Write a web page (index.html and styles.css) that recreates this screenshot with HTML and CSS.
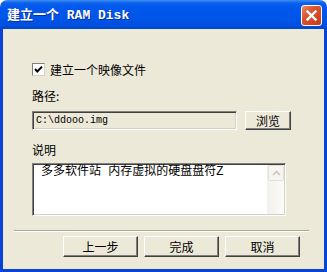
FILE: index.html
```html
<!DOCTYPE html>
<html lang="zh-CN">
<head>
    <meta charset="UTF-8">
    <meta name="viewport" content="width=device-width, initial-scale=1.0">
    <title>建立一个 RAM Disk</title>
    <link rel="stylesheet" href="styles.css">
</head>
<body>

<div class="window">
    <div class="titlebar">
        <span class="title">建立一个 RAM Disk</span>
        <button class="close-btn" aria-label="关闭">
            <svg width="11" height="11" viewBox="0 0 11 11">
                <path d="M1.5 1.5 L9.5 9.5 M9.5 1.5 L1.5 9.5" stroke="#fff" stroke-width="2.4" stroke-linecap="square"/>
            </svg>
        </button>
    </div>

    <div class="frame">
        <div class="client">
            <div class="form">
                <label class="check-row">
                    <span class="checkbox">
                        <svg width="11" height="11" viewBox="0 0 11 11">
                            <path d="M2 5 L4.3 7.5 L9 2.6" fill="none" stroke="#000" stroke-width="2"/>
                        </svg>
                    </span>
                    建立一个映像文件
                </label>

                <div class="label path-label">路径:</div>
                <div class="path-row">
                    <div class="path-box">C:\ddooo.img</div>
                    <button class="btn browse-btn">浏览</button>
                </div>

                <div class="label desc-label">说明</div>
                <div class="memo">
                    <div class="memo-text">多多软件站 内存虚拟的硬盘盘符Z</div>
                    <div class="scrollbar">
                        <div class="scroll-up">
                            <svg width="9" height="6" viewBox="0 0 9 6">
                                <path d="M1 5 L4.5 1.5 L8 5" fill="none" stroke="#c9c7ba" stroke-width="1.6"/>
                            </svg>
                        </div>
                    </div>
                </div>
            </div>

            <div class="separator"></div>

            <div class="button-row">
                <button class="btn wide-btn">上一步</button>
                <button class="btn wide-btn">完成</button>
                <button class="btn wide-btn">取消</button>
            </div>
        </div>
    </div>
</div>

</body>
</html>
```

FILE: styles.css
```css
body {
    margin: 0;
    padding: 0;
    background: #fff;
    font-family: "Noto Sans CJK SC", sans-serif;
    font-size: 12px;
    color: #000;
}

.window {
    width: 327px;
    height: 272px;
    display: flex;
    flex-direction: column;
    border-radius: 7px 7px 0 0;
    overflow: hidden;
}

.titlebar {
    height: 29px;
    box-sizing: border-box;
    padding: 2px 5px 0 7px;
    display: flex;
    align-items: center;
    justify-content: space-between;
    background: linear-gradient(#3d8ef5 0, #0c61ea 3px, #0158ee 7px, #0055e8 18px, #0050e0 25px, #0046cc 29px);
}

.title {
    color: #fff;
    font-family: "Liberation Mono", "Noto Sans CJK SC", monospace;
    font-size: 13px;
    font-weight: bold;
    line-height: 15px;
    text-shadow: 1px 1px 0 #0a2e9c;
}

.close-btn {
    width: 21px;
    height: 21px;
    padding: 0;
    border: 1px solid #fff;
    border-radius: 3px;
    background: linear-gradient(135deg, #e98a6c 0, #dd5531 35%, #c9391a 100%);
    display: flex;
    align-items: center;
    justify-content: center;
}

.frame {
    flex: 1;
    display: flex;
    padding: 0 3px 3px 3px;
    background: #0842d6;
}

.client {
    flex: 1;
    background: #ece9d8;
}

.form {
    padding: 34px 0 0 29px;
}

.check-row {
    display: flex;
    align-items: center;
    gap: 5px;
    height: 13px;
    line-height: 13px;
}

.checkbox {
    width: 13px;
    height: 13px;
    box-sizing: border-box;
    border: 1px solid #808080;
    border-right-color: #d4d0c8;
    border-bottom-color: #d4d0c8;
    background: #fff;
    display: flex;
    align-items: center;
    justify-content: center;
}

.label {
    line-height: 14px;
    height: 14px;
}

.path-label {
    margin-top: 13px;
}

.path-row {
    margin-top: 8px;
    display: flex;
    gap: 8px;
}

.path-box {
    width: 205px;
    height: 19px;
    box-sizing: border-box;
    padding-left: 1px;
    border: 1px solid #808080;
    border-right-color: #fff;
    border-bottom-color: #fff;
    box-shadow: inset 1px 1px 0 #404040, inset -1px -1px 0 #d4d0c8;
    padding: 0 3px;
    font-family: "Liberation Mono", monospace;
    font-size: 10px;
    line-height: 17px;
}

.btn {
    height: 19px;
    padding: 0;
    box-sizing: border-box;
    background: #ece9d8;
    border: 1px solid;
    border-color: #fff #404040 #404040 #fff;
    box-shadow: inset -1px -1px 0 #808080;
    font-family: "Noto Sans CJK SC", sans-serif;
    font-size: 12px;
    color: #000;
}

.browse-btn {
    width: 46px;
}

.desc-label {
    margin-top: 13px;
}

.memo {
    margin-top: 6px;
    width: 254px;
    height: 53px;
    box-sizing: border-box;
    display: flex;
    background: #fff;
    border: 1px solid #808080;
    border-right-color: #fff;
    border-bottom-color: #fff;
    box-shadow: inset 1px 1px 0 #404040, inset -1px -1px 0 #d4d0c8;
    padding: 1px;
}

.memo-text {
    flex: 1;
    padding: 0 7px;
    line-height: 14px;
    font-family: "Liberation Mono", "Noto Sans CJK SC", monospace;
    font-size: 12px;
}

.scrollbar {
    width: 16px;
    background: linear-gradient(90deg, #f3f2ec, #fbfbf8);
    border-left: 1px solid #f0efe8;
}

.scroll-up {
    height: 16px;
    box-sizing: border-box;
    border: 1px solid #e4e2d8;
    border-radius: 2px;
    background: #f6f5f0;
    display: flex;
    align-items: center;
    justify-content: center;
}

.separator {
    margin: 14px 15px 0 11px;
    border-top: 1px solid #aca899;
    border-bottom: 1px solid #fff;
}

.button-row {
    margin-top: 4px;
    padding-right: 24px;
    display: flex;
    justify-content: flex-end;
    gap: 6px;
}

.wide-btn {
    width: 75px;
    height: 21px;
}
```
